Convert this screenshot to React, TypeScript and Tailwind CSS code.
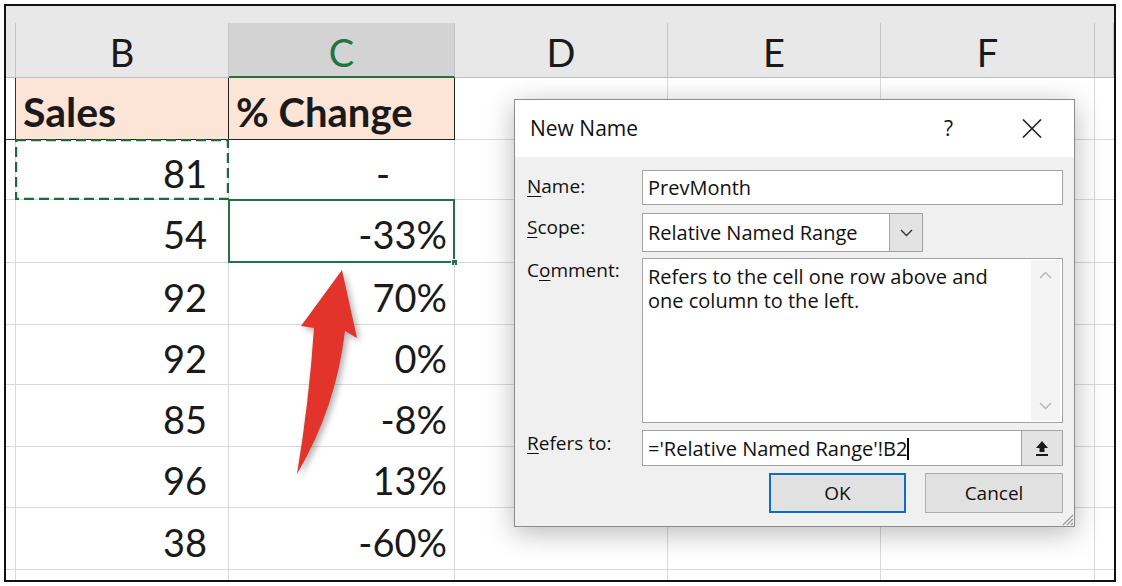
import React from "react";

const rows: [string, string][] = [
  ["81", "-"],
  ["54", "-33%"],
  ["92", "70%"],
  ["92", "0%"],
  ["85", "-8%"],
  ["96", "13%"],
  ["38", "-60%"],
];

function HeadCell({ label, active }: { label?: string; active?: boolean }) {
  return (
    <div className="flex flex-col bg-[#e8e8e8]">
      <div className="h-[17px]" />
      {active ? (
        <div className="flex-1 flex items-center justify-center pt-[4px] bg-[#d3d3d3] border-r border-r-[#c2c2c2] border-b-2 border-b-[#217346] text-[#217346]">
          {label}
        </div>
      ) : (
        <div className="flex-1 flex items-center justify-center pt-[4px] border-r border-r-[#c6c6c6] border-b border-b-[#bdbdbd] text-[#1a1a1a]">
          {label}
        </div>
      )}
    </div>
  );
}

function Grip() {
  return (
    <svg width="14" height="14" viewBox="0 0 14 14" className="absolute right-0 bottom-0">
      <path d="M13 3 L3 13 M13 7 L7 13 M13 11 L11 13" stroke="#9a9a9a" strokeWidth="1.2" />
    </svg>
  );
}

function Dialog() {
  return (
    <div className="absolute left-[514px] top-[99px] w-[561px] h-[428px] border border-[#8c8c8c] bg-[#f0f0f0] shadow-[0_6px_26px_rgba(0,0,0,0.28)] flex flex-col font-['Open_Sans',sans-serif] text-[#111]">
      <div className="h-[57px] bg-white flex items-center pl-[15px] pr-[32px]">
        <span className="text-[21px] leading-none">New Name</span>
        <span className="ml-auto text-[21px] leading-none">?</span>
        <svg width="20" height="19" viewBox="0 0 20 19" className="ml-[69px]">
          <path d="M1 0.5 L19 18.5 M19 0.5 L1 18.5" stroke="#222" strokeWidth="1.6" />
        </svg>
      </div>
      <div className="relative flex-1 flex flex-col pl-[12px] pr-[11px] pt-[13px] text-[19px] leading-[24px]">
        <div className="flex h-[35px]">
          <div className="w-[115px] pt-[4px]">
            <span className="underline underline-offset-[3px]">N</span>ame:
          </div>
          <div className="flex-1 bg-white border border-[#a3a3a3] pl-[5px] pt-[5px] text-[20px]">PrevMonth</div>
        </div>
        <div className="flex h-[39px] mt-[8px]">
          <div className="w-[115px] pt-[2px]">
            <span className="underline underline-offset-[3px]">S</span>cope:
          </div>
          <div className="w-[281px] flex bg-white border border-[#a3a3a3]">
            <div className="flex-1 pl-[5px] pt-[7px] text-[20px]">Relative Named Range</div>
            <div className="w-[33px] bg-[#e3e3e3] border-l border-[#a3a3a3] flex items-center justify-center">
              <svg width="13" height="8" viewBox="0 0 13 8">
                <path d="M1 1 L6.5 6.5 L12 1" fill="none" stroke="#333" strokeWidth="1.4" />
              </svg>
            </div>
          </div>
        </div>
        <div className="flex h-[165px] mt-[6px]">
          <div className="w-[115px]">
            C<span className="underline underline-offset-[3px]">o</span>mment:
          </div>
          <div className="flex-1 flex bg-white border border-[#a3a3a3]">
            <div className="flex-1 pl-[5px] pt-[6px] text-[20px]">
              Refers to the cell one row above and
              <br />
              one column to the left.
            </div>
            <div className="w-[29px] mr-[2px] my-[1px] bg-[#f4f4f4] flex flex-col items-center justify-between py-[11px]">
              <svg width="13" height="8" viewBox="0 0 13 8">
                <path d="M1 7 L6.5 1.5 L12 7" fill="none" stroke="#b4b4b4" strokeWidth="1.4" />
              </svg>
              <svg width="13" height="8" viewBox="0 0 13 8">
                <path d="M1 1 L6.5 6.5 L12 1" fill="none" stroke="#b4b4b4" strokeWidth="1.4" />
              </svg>
            </div>
          </div>
        </div>
        <div className="flex h-[36px] mt-[7px]">
          <div className="w-[115px] pt-[1px]">
            <span className="underline underline-offset-[3px]">R</span>efers to:
          </div>
          <div className="flex-1 flex bg-white border border-[#a3a3a3]">
            <div className="flex-1 pl-[5px] pt-[6px] flex text-[20px]">
              <span>='Relative Named Range'!B2</span>
              <span className="w-[1.5px] h-[22px] mt-[1px] bg-black" />
            </div>
            <div className="w-[41px] bg-[#e3e3e3] border-l border-[#a3a3a3] flex items-center justify-center">
              <svg width="16" height="18" viewBox="0 0 16 18">
                <path d="M8 2 L14 9 L10.5 9 L10.5 13 L5.5 13 L5.5 9 L2 9 Z" fill="#1a1a1a" />
                <rect x="2" y="15" width="12" height="2" fill="#1a1a1a" />
              </svg>
            </div>
          </div>
        </div>
        <div className="flex justify-end gap-[19px] h-[40px] mt-[7px]">
          <div className="w-[137px] bg-[#e1e1e1] border-2 border-[#0b6fc9] flex items-center justify-center">OK</div>
          <div className="w-[138px] bg-[#e1e1e1] border border-[#adadad] flex items-center justify-center">Cancel</div>
        </div>
        <Grip />
      </div>
    </div>
  );
}

function Arrow() {
  return (
    <svg
      width="80"
      height="220"
      viewBox="0 0 80 220"
      className="absolute left-[290px] top-[262px] drop-shadow-[3px_3px_3px_rgba(0,0,0,0.3)]"
    >
      <path d="M52 8 L67 76 L55 69 Q46 146 7 212 Q19 140 24 66 L11 64 Z" fill="#e2342a" />
    </svg>
  );
}

export default function App() {
  return (
    <div className="relative w-[1122px] h-[586px] bg-white pl-[4px] pt-[4px] overflow-hidden">
      <div className="w-[1112px] h-[578px] border-2 border-[#111] font-['Lato',sans-serif] text-[38px] leading-none text-[#1a1a1a]">
        <div className="grid grid-cols-[10px_213px_226px_213px_213px_214px_19px] grid-rows-[72px_62px_60px_63px_62px_60px_62px_61px_62px_10px] h-full">
          {/* column headers */}
          <HeadCell />
          <HeadCell label="B" />
          <HeadCell label="C" active />
          <HeadCell label="D" />
          <HeadCell label="E" />
          <HeadCell label="F" />
          <HeadCell />

          {/* header row */}
          <div className="border-r border-b border-r-[#333] border-b-[#333]" />
          <div className="bg-[#fce4d6] border-r border-b border-r-[#222] border-b-[#222] flex items-center pl-[7px] pt-[6px] font-bold text-[41px]">
            Sales
          </div>
          <div className="bg-[#fce4d6] border-r border-b border-r-[#222] border-b-[#222] flex items-center pl-[7px] pt-[6px] font-bold text-[40px]">
            % Change
          </div>
          <div className="border-r border-b border-[#d9d9d9]" />
          <div className="border-r border-b border-[#d9d9d9]" />
          <div className="border-r border-b border-[#d9d9d9]" />
          <div className="border-b border-[#d9d9d9]" />

          {rows.map(([b, c], i) => (
            <React.Fragment key={i}>
              <div className="border-r border-b border-[#d9d9d9]" />
              <div className="relative border-r border-b border-[#d9d9d9] flex items-center justify-end pr-[21px] pt-[6px]">
                {b}
                {i === 0 && (
                  <svg className="absolute -left-[1px] -top-[1px] w-[214px] h-[61px]" width="214" height="61">
                    <rect x="1" y="1" width="212" height="59" fill="none" stroke="#1f6b37" strokeWidth="2.4" strokeDasharray="10 5" />
                  </svg>
                )}
              </div>
              <div
                className={
                  i === 0
                    ? "relative border-r border-b border-[#d9d9d9] flex items-center justify-end pr-[64px] pt-[6px]"
                    : "relative border-r border-b border-[#d9d9d9] flex items-center justify-end pr-[7px] pt-[6px]"
                }
              >
                {c}
                {i === 1 && (
                  <>
                    <div className="absolute -left-[1px] -top-[1px] -right-[1px] -bottom-[1px] border-2 border-[#217346]" />
                    <div className="absolute -right-[4px] -bottom-[4px] w-[7px] h-[7px] bg-[#217346] border border-white" />
                  </>
                )}
              </div>
              <div className="border-r border-b border-[#d9d9d9]" />
              <div className="border-r border-b border-[#d9d9d9]" />
              <div className="border-r border-b border-[#d9d9d9]" />
              <div className="border-b border-[#d9d9d9]" />
            </React.Fragment>
          ))}

          {/* partial last row */}
          <div className="border-r border-[#d9d9d9]" />
          <div className="border-r border-[#d9d9d9]" />
          <div className="border-r border-[#d9d9d9]" />
          <div className="border-r border-[#d9d9d9]" />
          <div className="border-r border-[#d9d9d9]" />
          <div className="border-r border-[#d9d9d9]" />
          <div />
        </div>
      </div>
      <Arrow />
      <Dialog />
    </div>
  );
}
